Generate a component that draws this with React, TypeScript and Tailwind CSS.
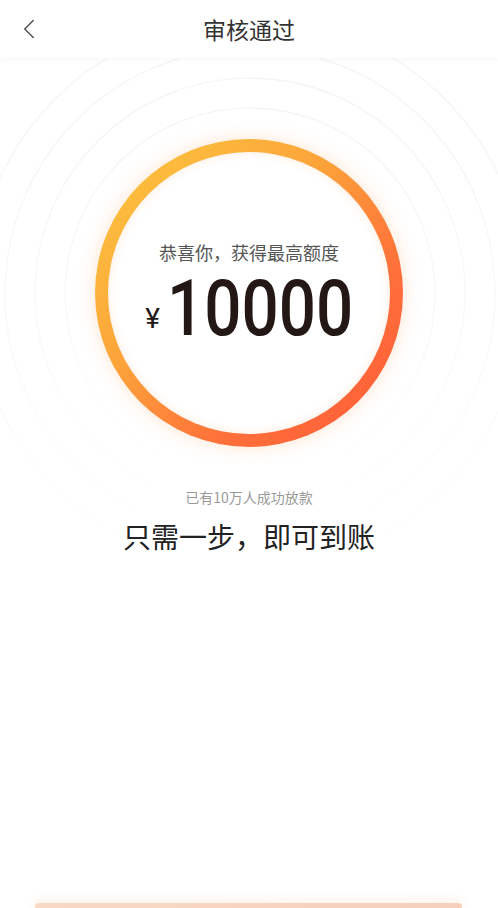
import { ChevronLeft } from "lucide-react";

const cjk = "font-['Noto_Sans_CJK_SC','Noto_Sans',sans-serif]";

export default function App() {
  return (
    <div className={`relative w-[498px] h-[908px] overflow-hidden bg-white ${cjk}`}>
      {/* Header */}
      <div className="relative z-10 h-[58px] flex items-center justify-center bg-white shadow-[0_2px_6px_rgba(0,0,0,0.03)]">
        <button className="absolute left-[12px] top-[12px] text-[#555]">
          <ChevronLeft size={34} strokeWidth={1.1} />
        </button>
        <h1 className="text-[23px] text-[#333] leading-none">审核通过</h1>
      </div>

      {/* faint rings */}
      <svg className="absolute left-0 top-0" width="498" height="908">
        <defs>
          <linearGradient id="fade" x1="0" y1="0" x2="0" y2="1">
            <stop offset="0" stopColor="#f3f3f3" />
            <stop offset="0.6" stopColor="#f8f8f8" />
            <stop offset="1" stopColor="#ffffff" />
          </linearGradient>
        </defs>
        {[185, 215, 245, 275].map((r) => (
          <circle key={r} cx="250" cy="293" r={r} fill="none" stroke="url(#fade)" strokeWidth="1.2" />
        ))}
      </svg>

      <div className="relative flex flex-col items-center">
        {/* Ring */}
        <div className="mt-[81px] w-[308px] h-[308px] rounded-full p-[13px] bg-[linear-gradient(135deg,#fcc93f_0%,#fca43a_40%,#ff6f3a_70%,#ff5a38_100%)] shadow-[0_0_18px_rgba(255,150,70,0.25)]">
          <div className="w-full h-full rounded-full bg-white flex flex-col items-center shadow-[inset_0_0_10px_rgba(255,150,70,0.2)]">
            <p className="mt-[91px] text-[18px] text-[#555] leading-none">恭喜你，获得最高额度</p>
            <div className="mt-[18px] flex items-end text-[#231815]">
              <span className="text-[28px] leading-none mb-[4px] mr-[7px] font-['Roboto',sans-serif]">¥</span>
              <div className="w-[186px] h-[58px] flex items-end">
                <span className="inline-block origin-left scale-x-[0.84] whitespace-nowrap text-[78px] leading-[56px] font-['Roboto',sans-serif] font-medium">10000</span>
              </div>
            </div>
          </div>
        </div>

        <p className="mt-[43px] text-[14px] text-[#9a9a9a] leading-none">已有10万人成功放款</p>
        <p className="mt-[18px] text-[28px] text-[#222] leading-none">只需一步，即可到账</p>
      </div>

      {/* bottom button top edge */}
      <div className="absolute left-[35px] right-[36px] top-[903px] h-[20px] rounded-t-[4px] bg-[linear-gradient(90deg,#f8d9c6,#f5cfb9)] shadow-[0_-4px_10px_rgba(255,160,100,0.12)]" />
    </div>
  );
}
